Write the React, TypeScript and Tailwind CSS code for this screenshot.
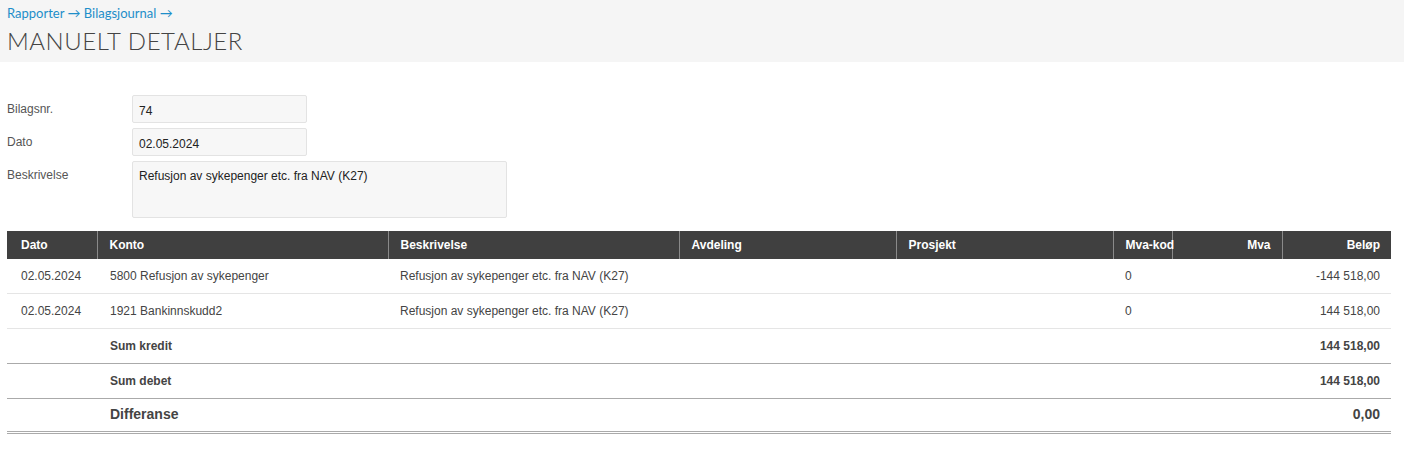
import React from 'react'

type Row = {
  dato: string
  konto: string
  beskrivelse: string
  mvaKode: string
  belop: string
}

const rows: Row[] = [
  { dato: '02.05.2024', konto: '5800 Refusjon av sykepenger', beskrivelse: 'Refusjon av sykepenger etc. fra NAV (K27)', mvaKode: '0', belop: '-144 518,00' },
  { dato: '02.05.2024', konto: '1921 Bankinnskudd2', beskrivelse: 'Refusjon av sykepenger etc. fra NAV (K27)', mvaKode: '0', belop: '144 518,00' },
]

const headers: { label: string; width: string; right?: boolean }[] = [
  { label: 'Dato', width: 'w-[90px]' },
  { label: 'Konto', width: 'w-[291px]' },
  { label: 'Beskrivelse', width: 'w-[291px]' },
  { label: 'Avdeling', width: 'w-[217px]' },
  { label: 'Prosjekt', width: 'w-[217px]' },
  { label: 'Mva-kod', width: 'w-[59px]' },
  { label: 'Mva', width: 'w-[110px]', right: true },
  { label: 'Beløp', width: 'w-[109px]', right: true },
]

function Field({ label, children }: { label: string; children: React.ReactNode }) {
  return (
    <div className="flex items-start">
      <div className="w-[125px] pt-[5px] text-[12px] text-[#555]">{label}</div>
      {children}
    </div>
  )
}

export default function App() {
  return (
    <div className="min-h-screen bg-white font-['Liberation_Sans',Arial,sans-serif] text-[12px] text-[#444]">
      <div className="h-[62px] bg-[#f5f5f5] px-[7px] pt-[5px]">
        <div className="font-['Lato',sans-serif] text-[13px] leading-[16px] text-[#1d8ec9]">
          Rapporter → Bilagsjournal →
        </div>
        <h1 className="mt-[5px] font-['Lato',sans-serif] text-[24px] font-light leading-[30px] tracking-[0.55px] text-[#444]">
          MANUELT DETALJER
        </h1>
      </div>

      <div className="flex flex-col gap-[5px] px-[7px] pt-[33px]">
        <Field label="Bilagsnr.">
          <div className="h-[28px] w-[175px] rounded-[2px] border border-[#e3e3e3] bg-[#f7f7f7] px-[6px] pt-[6px] text-[12px] text-[#222]">74</div>
        </Field>
        <Field label="Dato">
          <div className="h-[28px] w-[175px] rounded-[2px] border border-[#e3e3e3] bg-[#f7f7f7] px-[6px] pt-[6px] text-[12px] text-[#222]">02.05.2024</div>
        </Field>
        <Field label="Beskrivelse">
          <div className="h-[57px] w-[375px] rounded-[2px] border border-[#e3e3e3] bg-[#f7f7f7] px-[6px] pt-[5px] text-[12px] text-[#222]">
            Refusjon av sykepenger etc. fra NAV (K27)
          </div>
        </Field>
      </div>

      <div className="px-[7px] pt-[13px]">
        <table className="w-[1384px] table-fixed border-collapse">
          <thead>
            <tr className="h-[28px] bg-[#404040] text-white">
              {headers.map((h, i) => (
                <th
                  key={h.label}
                  className={`${h.width} whitespace-nowrap text-[12px] font-bold ${h.right ? 'pr-[11px] text-right' : 'text-left'} ${i === 0 ? 'pl-[14px]' : 'border-l border-[#8a8a8a] pl-[12px]'}`}
                >
                  {h.label}
                </th>
              ))}
            </tr>
          </thead>
          <tbody>
            {rows.map((r, i) => (
              <tr key={i} className={`${i === 0 ? 'h-[34px]' : 'h-[35px]'} border-b border-[#e5e5e5] text-[#444]`}>
                <td className="pl-[14px]">{r.dato}</td>
                <td className="pl-[13px]">{r.konto}</td>
                <td className="pl-[12px]">{r.beskrivelse}</td>
                <td />
                <td />
                <td className="pl-[12px]">{r.mvaKode}</td>
                <td />
                <td className="pr-[11px] text-right">{r.belop}</td>
              </tr>
            ))}
            <tr className="h-[35px] border-b border-[#aaa] font-bold text-[#444]">
              <td />
              <td className="pl-[13px]">Sum kredit</td>
              <td colSpan={5} />
              <td className="pr-[11px] text-right">144 518,00</td>
            </tr>
            <tr className="h-[35px] border-b border-[#aaa] font-bold text-[#444]">
              <td />
              <td className="pl-[13px]">Sum debet</td>
              <td colSpan={5} />
              <td className="pr-[11px] text-right">144 518,00</td>
            </tr>
            <tr className="h-[34px] border-b-[3px] border-double border-[#aaa] text-[14px] font-bold text-[#444]">
              <td />
              <td className="pl-[13px]">Differanse</td>
              <td colSpan={5} />
              <td className="pr-[11px] text-right">0,00</td>
            </tr>
          </tbody>
        </table>
      </div>
    </div>
  )
}
